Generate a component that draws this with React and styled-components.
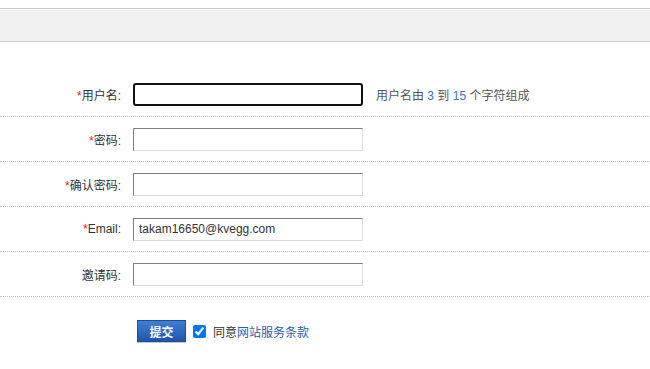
import React from 'react';
import styled, {createGlobalStyle} from 'styled-components';

const GlobalStyle = createGlobalStyle`
  body {
    margin: 0;
    background: #fff;
    font-family: "Liberation Sans", "Noto Sans CJK SC", sans-serif;
    font-size: 12px;
    color: #333;
  }
`;

const TopBar = styled.div`
  margin-top: 8px;
  border-top: 1px solid #c8c8c8;
  padding-top: 1px;
`;

const Band = styled.div`
  height: 31px;
  background: #f1f1f1;
  border-bottom: 1px solid #c8c8c8;
`;

const Form = styled.div`
  margin-top: 30px;
`;

const Row = styled.div`
  display: flex;
  align-items: center;
  height: 44px;
  border-bottom: 1px dotted #c4c4c4;
`;

const Label = styled.label`
  width: 121px;
  text-align: right;
  margin-right: 12px;
  color: #333;
`;

const Star = styled.span`
  color: #e02020;
`;

const Input = styled.input`
  box-sizing: border-box;
  width: 230px;
  height: 23px;
  padding: 0 5px;
  font-family: "Liberation Sans", "Noto Sans CJK SC", sans-serif;
  font-size: 12px;
  color: #333;
  outline: none;
  background: #fff;
  border: ${p => (p.$active ? '2px solid #111' : '1px solid')};
  border-color: ${p => (p.$active ? '#111' : '#808080 #dcdcdc #dcdcdc #808080')};
  border-radius: ${p => (p.$active ? '3px' : '0')};
`;

const Hint = styled.span`
  margin-left: 13px;
  color: #555;
`;

const Num = styled.span`
  color: #3a6fc4;
`;

const SubmitRow = styled.div`
  display: flex;
  align-items: center;
  padding-left: 137px;
  height: 68px;
`;

const SubmitButton = styled.button`
  width: 49px;
  height: 22px;
  padding: 0;
  border: 1px solid #1d4d96;
  background: linear-gradient(#3f7fd4, #1f55aa);
  color: #fff;
  font-weight: bold;
  font-size: 12px;
  font-family: "Noto Sans CJK SC", sans-serif;
  box-shadow: 0 1px 0 #c9c9c9;
`;

const Check = styled.input`
  margin: 0 7px 0 7px;
  width: 13px;
  height: 13px;
`;

const Agree = styled.span`
  color: #333;
`;

const Link = styled.a`
  color: #2a60a6;
  text-decoration: none;
`;

const fields = [
  {label: '用户名', required: true, active: true, hint: true},
  {label: '密码', required: true},
  {label: '确认密码', required: true},
  {label: 'Email', required: true, value: 'takam16650@kvegg.com'},
  {label: '邀请码', required: false},
];

export default function App() {
  return (
    <>
      <GlobalStyle />
      <TopBar>
        <Band />
      </TopBar>
      <Form>
        {fields.map(f => (
          <Row key={f.label}>
            <Label>
              {f.required && <Star>*</Star>}
              {f.label}:
            </Label>
            <Input $active={f.active} defaultValue={f.value || ''} />
            {f.hint && (
              <Hint>
                用户名由 <Num>3</Num> 到 <Num>15</Num> 个字符组成
              </Hint>
            )}
          </Row>
        ))}
        <SubmitRow>
          <SubmitButton>提交</SubmitButton>
          <Check type="checkbox" defaultChecked />
          <Agree>同意</Agree>
          <Link href="#">网站服务条款</Link>
        </SubmitRow>
      </Form>
    </>
  );
}
